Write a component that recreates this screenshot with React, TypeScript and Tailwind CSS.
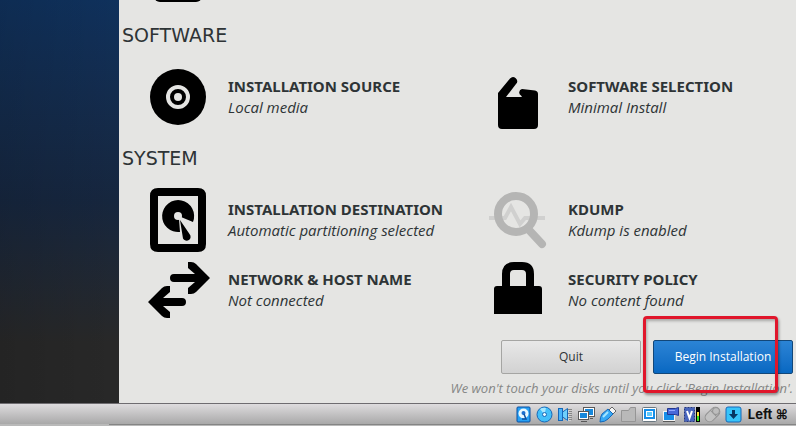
import React, { ReactNode } from "react";

interface SpokeProps {
  title: string;
  status: string;
  children: ReactNode;
}

function Spoke({ title, status, children }: SpokeProps) {
  return (
    <button type="button" className="flex items-center gap-[18px] text-left">
      <svg viewBox="0 0 64 64" className="size-16 shrink-0" aria-hidden="true">
        {children}
      </svg>
      <span className="flex flex-col text-[15px] leading-[21px] whitespace-nowrap">
        <span className="font-bold">{title}</span>
        <span className="font-['Open_Sans',sans-serif] italic">{status}</span>
      </span>
    </button>
  );
}

function Category({ name, children }: { name: string; children: ReactNode }) {
  return (
    <section>
      <h2 className="pl-[3px] font-['DejaVu_Sans',sans-serif] text-[19px] leading-6">
        {name}
      </h2>
      <div className="mt-[18px] grid grid-cols-2 gap-x-[30px] gap-y-1.5 pl-[27px]">
        {children}
      </div>
    </section>
  );
}

function StatusIcon({ label, children }: { label: string; children: ReactNode }) {
  return (
    <svg viewBox="0 0 17 17" className="size-[17px] shrink-0" role="img" aria-label={label}>
      {children}
    </svg>
  );
}

function StatusBar() {
  return (
    <footer className="border-t border-[#6e6c70] bg-[#b9b9b9]">
      <div className="flex h-5 items-center justify-end gap-1 bg-linear-to-b from-[#dedcde] to-[#a9a9a9] pr-2">
        <StatusIcon label="Hard disk">
          <rect x="2" y="1" width="13" height="15" rx="1" fill="#25a0f5" stroke="#0b4fa0" />
          <circle cx="8.5" cy="7.5" r="5" fill="#e8f8ff" />
          <circle cx="8.5" cy="7" r="2" fill="#1b6fd0" />
          <path d="M9 8l2 5H7" stroke="#0b4fa0" strokeWidth="1.5" fill="none" />
        </StatusIcon>
        <StatusIcon label="Optical drive">
          <circle cx="8.5" cy="8.5" r="7.5" fill="#42c0fa" stroke="#1768b8" />
          <path d="M8.500 8.500L4 3a7 7 0 0 1 6-1z" fill="#a5e6ff" />
          <circle cx="8.500" cy="8.500" r="2" fill="#e8fbff" stroke="#1768b8" />
        </StatusIcon>
        <StatusIcon label="Audio">
          <path d="M9 2h5v13H9z" fill="#d0d0d0" />
          <path d="M10 3.500h5M12 5.500h3M10 7.500h5M12 9.500h3M10 11.500h5M12 13.500h3" stroke="#858585" />
          <path d="M5 6.500L10.500 2.500V14.500L5 10.500z" fill="#6fd0fb" stroke="#1768b8" />
          <rect x="1.500" y="2.500" width="4" height="12" fill="#49b5fa" stroke="#1768b8" />
        </StatusIcon>
        <StatusIcon label="Network">
          <rect x="5.500" y="1.500" width="11" height="9" fill="#1688dc" stroke="#595959" />
          <rect x="6.500" y="2.500" width="9" height="7" fill="none" stroke="#fff" />
          <rect x="0.500" y="5.500" width="10" height="8" fill="#1688dc" stroke="#595959" />
          <rect x="1.500" y="6.500" width="8" height="6" fill="none" stroke="#fff" />
          <path d="M3 15.500h6M12 12.500h3" stroke="#595959" />
        </StatusIcon>
        <StatusIcon label="USB">
          <path d="M10 4l3-3 4 4-3 3z" fill="#f4f4f4" stroke="#666" />
          <path d="M1 16q0-5 2-8l6-5 5 5-5 5q-3 3-8 3z" fill="#36a8f5" stroke="#1768b8" />
          <path d="M4 11l5-5" stroke="#a5e6ff" strokeWidth="2" />
        </StatusIcon>
        <StatusIcon label="Shared folders">
          <path d="M1.500 15.500v-11h7l2-3h5v14z" fill="#b9b9b9" stroke="#959595" />
        </StatusIcon>
        <StatusIcon label="Display">
          <rect x="1.500" y="1.500" width="14" height="14" rx="1" fill="#fff" stroke="#6a7780" />
          <rect x="3" y="3" width="11" height="10" fill="#168ee8" />
          <rect x="5.500" y="5.500" width="6" height="5" fill="#5fcaff" stroke="#fff" />
        </StatusIcon>
        <StatusIcon label="Recording">
          <rect x="1.500" y="5.500" width="11" height="9" fill="#168ee8" stroke="#f4f4f4" />
          <path d="M1 15.500h12" stroke="#595959" />
          <path d="M5.500 2.500h8l3-1v8l-3-1h-8z" fill="#4868d8" stroke="#23358f" />
          <path d="M7 4.500h6" stroke="#91a8ff" />
        </StatusIcon>
        <StatusIcon label="Processor">
          <rect x="1.500" y="1.500" width="10" height="14" fill="#4865bd" stroke="#24367e" strokeDasharray="2 1" />
          <path d="M4 5l2.500 7L9 5" fill="none" stroke="#fff" strokeWidth="2" />
          <path d="M13 1h4v15h-4z" fill="#000" />
          <path d="M14 6h2v9h-2z" fill="#ffe13b" />
          <path d="M14 10h2v5h-2z" fill="#35e21b" />
        </StatusIcon>
        <StatusIcon label="Mouse integration">
          <g transform="rotate(45 8.5 8.5)" fill="#c2c2c2" stroke="#919191">
            <rect x="4" y="0" width="9" height="17" rx="4.500" />
            <path d="M4 7h9M8.500 1v6" />
          </g>
          <circle cx="12" cy="5" r="3.500" fill="#bdbdbd" stroke="#919191" />
        </StatusIcon>
        <StatusIcon label="Keyboard capture">
          <rect x="1" y="1" width="15" height="15" rx="2" fill="#38c4fa" stroke="#1768b8" />
          <path d="M7 4h3v4h3l-4.500 5L4 8h3z" fill="#073763" />
        </StatusIcon>
        <span className="pl-0.5 font-[Inter,'DejaVu_Sans',sans-serif] text-[13px] leading-5 font-bold whitespace-nowrap text-[#111]">
          Left ⌘
        </span>
      </div>
      <div className="ml-[109px] h-0.5 border-t border-[#858585]" />
    </footer>
  );
}

export default function App() {
  return (
    <div className="flex min-h-screen flex-col overflow-hidden bg-[#e5e5e3] font-['Noto_Sans',sans-serif] text-[#2e3436]">
      <div className="flex flex-1">
        <aside className="w-[119px] shrink-0 bg-linear-to-b from-[#0f315c] via-[#16263e] to-[#282828] to-85%">
          <div className="h-full bg-linear-to-r from-black/10 to-transparent" />
        </aside>

        <main className="min-w-0 flex-1">
          {/* tail end of the spoke scrolled out above */}
          <svg viewBox="0 61 64 3" className="ml-[27px] h-[3px] w-16" aria-hidden="true">
            <rect x="8" y="20" width="48" height="43" rx="6" />
          </svg>

          <div className="mt-5 flex flex-col gap-[17px]">
            <Category name="SOFTWARE">
              <Spoke title="INSTALLATION SOURCE" status="Local media">
                <circle cx="32" cy="32" r="28" />
                <circle cx="32" cy="32" r="10" fill="none" stroke="#e5e5e3" strokeWidth="4" />
                <circle cx="32" cy="32" r="4" fill="#e5e5e3" />
              </Spoke>
              <Spoke title="SOFTWARE SELECTION" status="Minimal Install">
                <path d="M12 32V28L24 13.500A4 4 0 0 1 30 19L20 32H36L35 30.500A3.500 3.500 0 0 1 36 24L49 25.500Q52 26 52 29V60Q52 64 48 64H16Q12 64 12 60Z" />
              </Spoke>
            </Category>

            <Category name="SYSTEM">
              <Spoke title="INSTALLATION DESTINATION" status="Automatic partitioning selected">
                <path
                  fillRule="evenodd"
                  d="M12 0H52Q60 0 60 8V56Q60 64 52 64H12Q4 64 4 56V8Q4 0 12 0ZM12 8V56H52V8Z"
                />
                <path d="M47 34A16 16 0 1 0 34 44L33 31 35 29Z" />
                <circle cx="32" cy="28" r="4" fill="#e5e5e3" />
                <path d="M34 32L43.500 46A4 4 0 1 1 37 50.500Z" />
              </Spoke>
              <Spoke title="KDUMP" status="Kdump is enabled">
                <path d="M3 30H19L25 19L34 36L39 30H59" fill="none" stroke="#d0d0cf" strokeWidth="4" />
                <circle cx="30" cy="26" r="18" fill="none" stroke="#b5b5b4" strokeWidth="8" />
                <path d="M43 42L56 56" stroke="#b5b5b4" strokeWidth="8" strokeLinecap="round" />
              </Spoke>
              <Spoke title="NETWORK & HOST NAME" status="Not connected">
                <path d="M28 16H49L42 10V4H45Q48 4 50 6L64 20 50 34Q48 36 45 36H42V30L49 24H28A4 4 0 0 1 28 16Z" />
                <path d="M36 40H17L24 34V28H21Q18 28 16 30L2 44 16 58Q18 60 21 60H24V54L17 48H36A4 4 0 0 0 36 40Z" />
              </Spoke>
              <Spoke title="SECURITY POLICY" status="No content found">
                <path
                  fillRule="evenodd"
                  d="M16 28V16Q16 4 28 4H36Q48 4 48 16V28H53Q56 28 56 31V56H8V31Q8 28 11 28ZM24 28H40V16Q40 12 36 12H28Q24 12 24 16Z"
                />
              </Spoke>
            </Category>
          </div>

          <div className="mt-[18px] flex justify-end gap-3 pr-[3px] font-['Open_Sans',sans-serif] text-xs">
            <button
              type="button"
              className="h-[34px] w-[140px] rounded-xs border border-[#a5a5a3] bg-linear-to-b from-[#e8e8e8] to-[#d2d2d2]"
            >
              Quit
            </button>
            <div className="relative">
              <button
                type="button"
                className="h-[34px] w-[140px] rounded-xs border border-[#124779] bg-linear-to-b from-[#2b84d5] to-[#0768c2] text-white"
              >
                Begin Installation
              </button>
              <div className="pointer-events-none absolute -top-6 right-[15px] -bottom-[19px] -left-2.5 rounded-sm border-3 border-[#e0162b] shadow-[1px_2px_3px_#0006,inset_1px_2px_3px_#0004]" />
            </div>
          </div>

          <p className="mt-1 pr-[3px] pb-1 text-right font-['Open_Sans',sans-serif] text-[13px] leading-5 whitespace-nowrap text-[#858786] italic">
            We won't touch your disks until you click 'Begin Installation'.
          </p>
        </main>
      </div>

      <StatusBar />
    </div>
  );
}
